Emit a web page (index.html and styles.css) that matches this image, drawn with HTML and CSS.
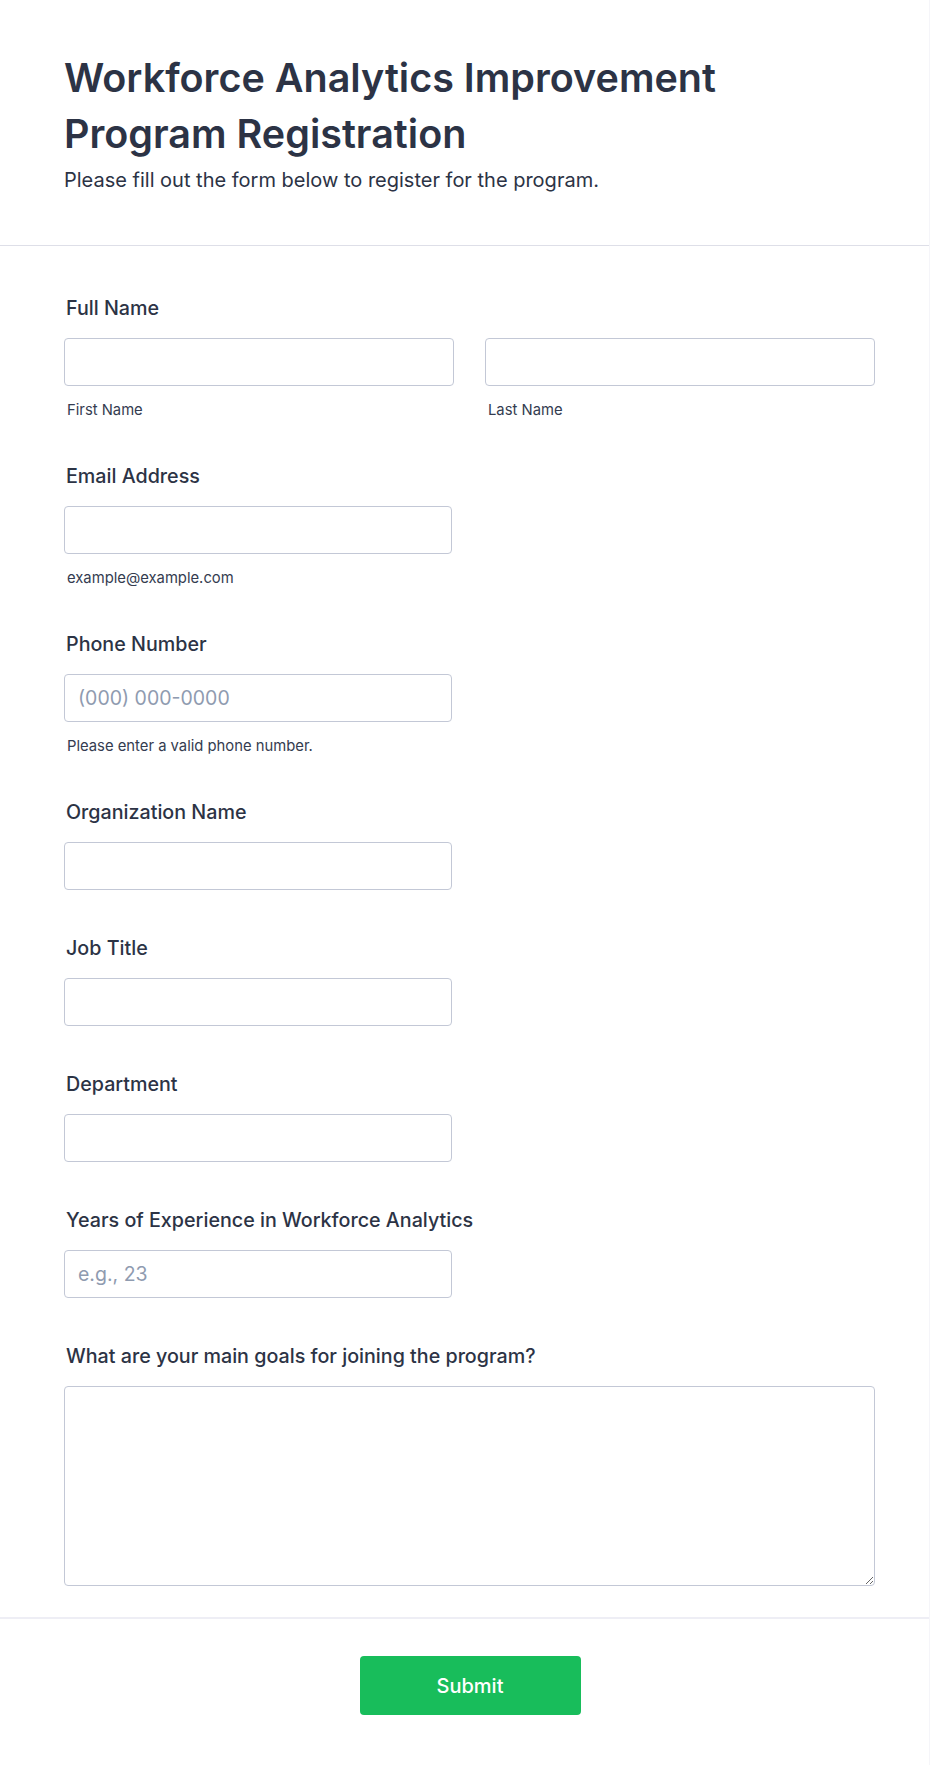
FILE: index.html
```html
<!DOCTYPE html>
<html lang="en">
<head>
<meta charset="utf-8">
<title>Workforce Analytics Improvement Program Registration</title>
<link rel="stylesheet" href="styles.css">
</head>
<body>
<form class="form" onsubmit="return false;">
  <header class="form-header">
    <h1 class="title">Workforce Analytics Improvement Program Registration</h1>
    <p class="subtitle">Please fill out the form below to register for the program.</p>
  </header>
  <div class="form-body">
    <div class="field">
      <label class="label">Full Name</label>
      <div class="name-row">
        <div class="name-col">
          <input class="input" type="text">
          <span class="sublabel">First Name</span>
        </div>
        <div class="name-col">
          <input class="input" type="text">
          <span class="sublabel">Last Name</span>
        </div>
      </div>
    </div>
    <div class="field">
      <label class="label">Email Address</label>
      <input class="input input-short" type="email">
      <span class="sublabel">example@example.com</span>
    </div>
    <div class="field">
      <label class="label">Phone Number</label>
      <input class="input input-short" type="tel" placeholder="(000) 000-0000">
      <span class="sublabel">Please enter a valid phone number.</span>
    </div>
    <div class="field">
      <label class="label">Organization Name</label>
      <input class="input input-short" type="text">
    </div>
    <div class="field">
      <label class="label">Job Title</label>
      <input class="input input-short" type="text">
    </div>
    <div class="field">
      <label class="label">Department</label>
      <input class="input input-short" type="text">
    </div>
    <div class="field">
      <label class="label">Years of Experience in Workforce Analytics</label>
      <input class="input input-short" type="text" placeholder="e.g., 23">
    </div>
    <div class="field">
      <label class="label">What are your main goals for joining the program?</label>
      <textarea class="textarea"></textarea>
    </div>
  </div>
  <footer class="form-footer">
    <button class="submit" type="submit">Submit</button>
  </footer>
</form>
</body>
</html>
```

FILE: styles.css
```css
* {
  box-sizing: border-box;
}

html, body {
  margin: 0;
  padding: 0;
  background: #ffffff;
}

body {
  font-family: Inter, "Noto Sans", "Liberation Sans", sans-serif;
  color: #2c3345;
}

.form {
  width: 930px;
  min-height: 1765px;
  margin: 0;
  border-right: 1px solid #f5f5f9;
  display: flex;
  flex-direction: column;
}

.form-header {
  padding: 50px 55px 53px 64px;
  border-bottom: 1px solid #dedfe8;
}

.title {
  margin: 0 0 6px 0;
  font-size: 39.5px;
  line-height: 56px;
  font-weight: 600;
  color: #2c3345;
  max-width: 760px;
}

.subtitle {
  margin: 0;
  font-size: 20px;
  line-height: 24px;
  font-weight: 400;
  color: #2c3345;
}

.form-body {
  padding: 26px 55px 9px 64px;
}

.field {
  padding: 24px 0 22px 0;
  display: flex;
  flex-direction: column;
  align-items: flex-start;
}

.label {
  display: block;
  padding-left: 2px;
  margin-bottom: 18px;
  font-size: 19.7px;
  line-height: 24px;
  font-weight: 500;
  color: #2c3345;
}

.name-row {
  display: flex;
  gap: 31px;
  width: 811px;
}

.name-col {
  flex: 1;
  display: flex;
  flex-direction: column;
}

.input {
  display: block;
  width: 100%;
  height: 48px;
  margin: 0;
  padding: 0 13px;
  border: 1px solid #c3c8d6;
  border-radius: 4px;
  background: #ffffff;
  font-family: Inter, "Noto Sans", "Liberation Sans", sans-serif;
  font-size: 19.5px;
  color: #2c3345;
  outline: none;
}

.input-short {
  width: 388px;
}

.input::placeholder {
  color: #8f9bb0;
  opacity: 1;
}

.sublabel {
  display: block;
  padding-left: 3px;
  margin-top: 16px;
  font-size: 14.8px;
  line-height: 16px;
  color: #343c50;
}

.textarea {
  display: block;
  width: 811px;
  height: 200px;
  margin: 0;
  padding: 10px 13px;
  border: 1px solid #c3c8d6;
  border-radius: 4px;
  background: #ffffff;
  font-family: Inter, "Noto Sans", "Liberation Sans", sans-serif;
  font-size: 19.5px;
  color: #2c3345;
  outline: none;
}

.form-footer {
  border-top: 2px solid #eeeef5;
  padding: 37px 55px 50px 64px;
  display: flex;
  justify-content: center;
  flex: 1;
}

.submit {
  width: 221px;
  height: 59px;
  margin-left: 2px;
  border: none;
  border-radius: 4px;
  background: #18bd5b;
  color: #ffffff;
  font-family: Inter, "Noto Sans", "Liberation Sans", sans-serif;
  font-size: 20px;
  font-weight: 500;
  cursor: pointer;
}
```
